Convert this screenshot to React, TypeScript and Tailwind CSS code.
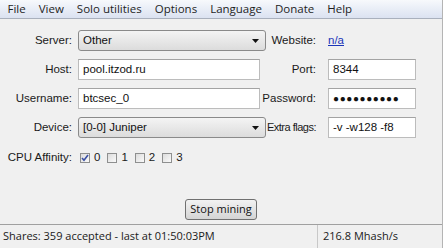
import { useState } from "react";

const menuItems = ["File", "View", "Solo utilities", "Options", "Language", "Donate", "Help"];

function Label({ children, className = "" }: { children: React.ReactNode; className?: string }) {
  return (
    <div className={`flex items-center justify-end whitespace-nowrap text-[11.5px] text-[#1a1a1a] ${className}`}>
      {children}
    </div>
  );
}

function TextBox({ value, className = "" }: { value: React.ReactNode; className?: string }) {
  return (
    <div
      className={`h-[21px] flex items-center bg-white border border-[#bcbcbc] border-t-[#a3a3a3] pl-[4px] text-[11.5px] text-[#111] ${className}`}
    >
      {value}
    </div>
  );
}

function Combo({ value }: { value: string }) {
  return (
    <div className="h-[21px] w-[188px] flex items-center justify-between rounded-[3px] border border-[#8a8a8a] bg-gradient-to-b from-[#f4f4f4] to-[#dcdcdc] pl-[4px] pr-[6px] text-[11.5px] text-[#111]">
      <span>{value}</span>
      <svg width="7" height="4" viewBox="0 0 7 4">
        <path d="M0 0h7L3.5 4z" fill="#111" />
      </svg>
    </div>
  );
}

function Check({ label, checked }: { label: string; checked?: boolean }) {
  return (
    <div className="flex items-center gap-[4px]">
      <div className="w-[10px] h-[10px] border border-[#8e8f8f] bg-gradient-to-br from-[#dcdcdc] to-[#fafafa] flex items-center justify-center">
        {checked && (
          <svg width="8" height="8" viewBox="0 0 8 8">
            <path d="M1 4l2 2.3L7 1" stroke="#3a4fa3" strokeWidth="1.6" fill="none" />
          </svg>
        )}
      </div>
      <span className="text-[11.5px] text-[#1a1a1a]">{label}</span>
    </div>
  );
}

function App() {
  const [mining] = useState(true);

  return (
    <div className="w-[446px] h-[248px] bg-white flex overflow-hidden font-['Liberation_Sans',sans-serif]">
      <div className="w-[443px] h-full bg-[#f0f0f0] border-r border-[#b4b4b4] flex flex-col">
        {/* menu */}
        <div className="h-[19px] flex items-center pl-[1px] bg-gradient-to-b from-[#f7f9fc] to-[#dbe2f1] border-b border-[#a9b0bd] font-['Open_Sans',sans-serif] text-[11.5px] text-[#1e1e1e]">
          {menuItems.map((m) => (
            <span key={m} className="px-[6.5px]">
              {m}
            </span>
          ))}
        </div>

        {/* form */}
        <div className="flex-1 flex flex-col pt-[11px]">
          <div className="grid grid-cols-[72px_188px_56px_100px] gap-x-0 gap-y-[8px]">
            <Label>Server:</Label>
            <div className="ml-[6px]">
              <Combo value="Other" />
            </div>
            <Label>Website:</Label>
            <div className="ml-[12px] flex items-center text-[11.5px]">
              <span className="text-[#1a35b8] underline">n/a</span>
            </div>

            <Label>Host:</Label>
            <TextBox value="pool.itzod.ru" className="ml-[6px]" />
            <Label>Port:</Label>
            <TextBox value="8344" className="ml-[12px]" />

            <Label>Username:</Label>
            <TextBox value="btcsec_0" className="ml-[6px]" />
            <Label>Password:</Label>
            <TextBox
              value={<span className="text-[10px] tracking-[0.6px] font-bold">●●●●●●●●●●</span>}
              className="ml-[12px]"
            />

            <Label>Device:</Label>
            <div className="ml-[6px]">
              <Combo value="[0-0] Juniper" />
            </div>
            <Label className="tracking-[-0.5px] !text-[11px]">Extra flags:</Label>
            <TextBox value="-v -w128 -f8" className="ml-[12px]" />
          </div>

          <div className="flex items-center mt-[12px] h-[16px]">
            <Label className="w-[72px]">CPU Affinity:</Label>
            <div className="flex items-center ml-[8px] gap-[7px]">
              <Check label="0" checked />
              <Check label="1" />
              <Check label="2" />
              <Check label="3" />
            </div>
          </div>

          <div className="flex-1 flex items-end justify-center pb-[4px]">
            <button className="w-[72px] h-[21px] rounded-[3px] border border-[#707070] bg-gradient-to-b from-[#f2f2f2] to-[#d5d5d5] font-['Open_Sans',sans-serif] text-[11px] text-[#111]">
              {mining ? "Stop mining" : "Start mining"}
            </button>
          </div>
        </div>

        {/* status bar */}
        <div className="h-[24px] flex border-t border-[#a0a0a0] font-['Open_Sans',sans-serif] text-[11px] text-[#1a1a1a]">
          <div className="w-[318px] flex items-center pl-[3px] border-r border-[#c8c8c8]">
            Shares: 359 accepted - last at 01:50:03PM
          </div>
          <div className="flex items-center pl-[5px]">216.8 Mhash/s</div>
        </div>
      </div>
    </div>
  );
}

export default App;
